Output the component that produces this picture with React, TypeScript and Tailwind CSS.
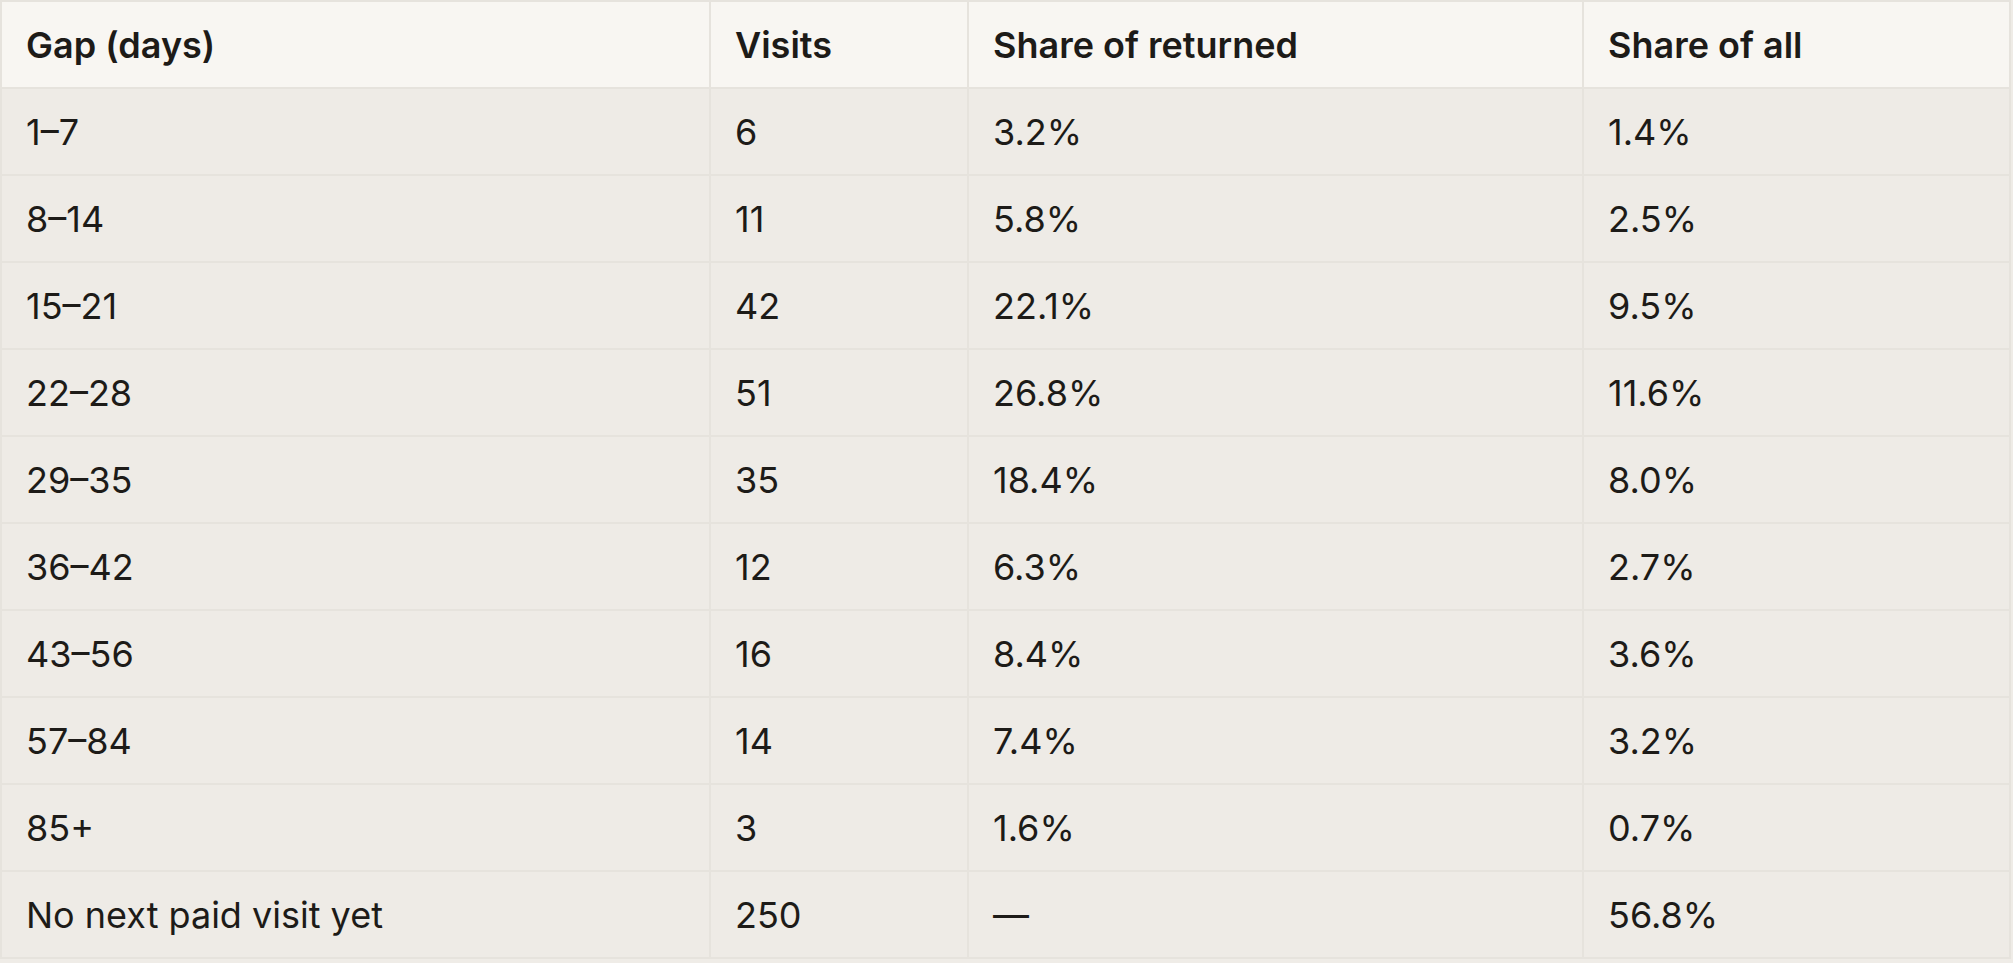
import React from "react";

const rows: [string, string, string, string][] = [
  ["1–7", "6", "3.2%", "1.4%"],
  ["8–14", "11", "5.8%", "2.5%"],
  ["15–21", "42", "22.1%", "9.5%"],
  ["22–28", "51", "26.8%", "11.6%"],
  ["29–35", "35", "18.4%", "8.0%"],
  ["36–42", "12", "6.3%", "2.7%"],
  ["43–56", "16", "8.4%", "3.6%"],
  ["57–84", "14", "7.4%", "3.2%"],
  ["85+", "3", "1.6%", "0.7%"],
  ["No next paid visit yet", "250", "—", "56.8%"],
];

const headers = ["Gap (days)", "Visits", "Share of returned", "Share of all"];
const widths = ["w-[707px]", "w-[256px]", "w-[613px]", "w-[425px]"];

export default function App() {
  return (
    <div className="min-h-screen bg-[#efece7] font-['Inter',sans-serif] text-[#1d1b18]">
      <table className="border-separate border-spacing-[2px] bg-[#e6e3dd]">
        <thead>
          <tr>
            {headers.map((h, i) => (
              <th
                key={h}
                className={`${widths[i]} h-[85px] bg-[#f8f6f2] px-[24px] text-left align-middle text-[36px] font-semibold`}
              >
                {h}
              </th>
            ))}
          </tr>
        </thead>
        <tbody>
          {rows.map((r) => (
            <tr key={r[0]}>
              {r.map((c, i) => (
                <td
                  key={i}
                  className="h-[85px] bg-[#eeebe6] px-[24px] align-middle text-[36px] font-normal"
                >
                  {c}
                </td>
              ))}
            </tr>
          ))}
        </tbody>
      </table>
    </div>
  );
}
